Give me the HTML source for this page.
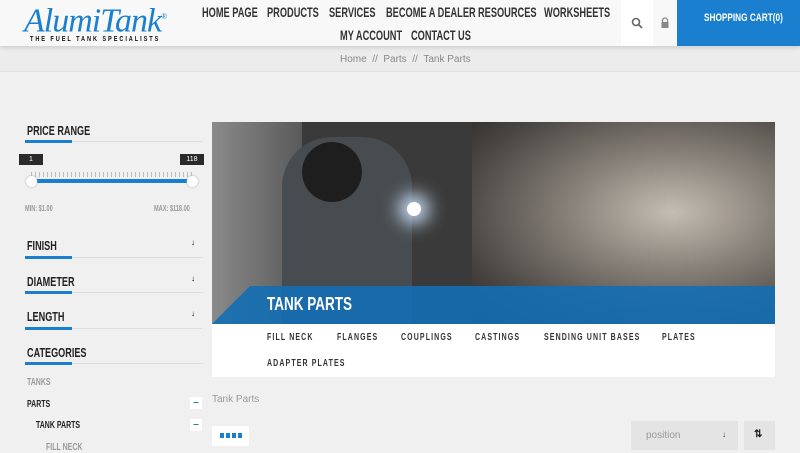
<!DOCTYPE html>
<html><head><style>
*{margin:0;padding:0;box-sizing:border-box}
body{width:800px;height:450px;overflow:hidden;background:#f0f0f0;font-family:"Liberation Sans",sans-serif;position:relative}
.a{position:absolute}
.c{font-family:"Liberation Sans",sans-serif;font-weight:bold;color:#333;white-space:nowrap;transform:scaleX(.7);transform-origin:0 0}
.nav{font-size:14px;color:#333;transform:scaleX(.66)}
.h{font-size:13px;color:#222}
.ul{height:1px;background:#ddd;width:177px;left:25px}
.ul b{position:absolute;left:0;top:-1px;width:47px;height:3px;background:#1a7fcf}
.sub{font-size:10px;letter-spacing:1.6px;color:#333}
</style></head><body>
<div class="a" style="left:0;top:0;width:800px;height:46px;background:#f8f8f8;box-shadow:0 2px 4px rgba(0,0,0,.12);z-index:2"></div>
<div class="a" style="left:24px;top:0px;z-index:3;font-family:'Liberation Serif',serif;font-style:italic;font-size:34px;color:#1a7fcf;letter-spacing:-1px;line-height:34px">AlumiTank<sup style="font-size:8px;font-style:normal">®</sup></div>
<div class="a c" style="left:30px;top:36px;z-index:3;font-size:7px;letter-spacing:2.4px;color:#111;transform:scaleX(.8)">THE FUEL TANK SPECIALISTS</div>
<div class="a c nav" style="left:202px;top:4px;z-index:3">HOME PAGE</div>
<div class="a c nav" style="left:267px;top:4px;z-index:3">PRODUCTS</div>
<div class="a c nav" style="left:329px;top:4px;z-index:3">SERVICES</div>
<div class="a c nav" style="left:386px;top:4px;z-index:3">BECOME A DEALER</div>
<div class="a c nav" style="left:478px;top:4px;z-index:3">RESOURCES</div>
<div class="a c nav" style="left:544px;top:4px;z-index:3">WORKSHEETS</div>
<div class="a c nav" style="left:340px;top:27px;z-index:3">MY ACCOUNT</div>
<div class="a c nav" style="left:411px;top:27px;z-index:3">CONTACT US</div>
<div class="a" style="left:621px;top:0;width:32px;height:46px;background:#fff;z-index:3"></div>
<svg class="a" style="left:631px;top:17px;z-index:4" width="12" height="12"><circle cx="5" cy="5" r="3.5" stroke="#666" stroke-width="1.6" fill="none"/><path d="M7.5 7.5L11 11" stroke="#666" stroke-width="1.8"/></svg>
<svg class="a" style="left:660px;top:17px;z-index:4" width="10" height="12"><path d="M2.5 5V3.5a2.5 2.5 0 0 1 5 0V5" stroke="#888" stroke-width="1.3" fill="none"/><rect x="1.5" y="5" width="7" height="6" fill="#888"/></svg>
<div class="a" style="left:677px;top:0;width:123px;height:46px;background:#1a7fcf;z-index:3"></div>
<div class="a c" style="left:704px;top:12px;z-index:4;color:#fff;font-size:11px;transform:scaleX(.75)">SHOPPING CART(0)</div>
<div class="a" style="left:0;top:46px;width:800px;height:26px;background:#ececec;border-bottom:1px solid #e2e2e2"></div>
<div class="a" style="left:340px;top:54px;font-size:10px;color:#888">Home &nbsp;// &nbsp;Parts &nbsp;// &nbsp;Tank Parts</div>

<div class="a c h" style="left:27px;top:123px">PRICE RANGE</div>
<div class="a ul" style="top:141px"><b></b></div>
<div class="a" style="left:19px;top:154px;width:24px;height:11px;background:#2a2a2a;color:#fff;font-size:7px;text-align:center;line-height:11px">1</div>
<div class="a" style="left:180px;top:154px;width:24px;height:11px;background:#2a2a2a;color:#fff;font-size:7px;text-align:center;line-height:11px">118</div>
<div class="a" style="left:31px;top:172px;width:161px;height:5px;background:repeating-linear-gradient(90deg,#bbb 0 1px,transparent 1px 4px)"></div>
<div class="a" style="left:31px;top:179px;width:161px;height:4px;background:#1a7fcf"></div>
<div class="a" style="left:26px;top:176px;width:11px;height:11px;border-radius:50%;background:#fff;box-shadow:0 0 2px #aaa"></div>
<div class="a" style="left:187px;top:176px;width:11px;height:11px;border-radius:50%;background:#fff;box-shadow:0 0 2px #aaa"></div>
<div class="a c" style="left:25px;top:204px;font-size:8px;color:#999">MIN: $1.00</div>
<div class="a c" style="left:154px;top:204px;font-size:8px;color:#999">MAX: $118.00</div>
<div class="a c h" style="left:27px;top:238px">FINISH</div><div class="a" style="left:191px;top:238px;font-size:8px">↓</div>
<div class="a ul" style="top:257px"><b></b></div>
<div class="a c h" style="left:27px;top:274px">DIAMETER</div><div class="a" style="left:191px;top:274px;font-size:8px">↓</div>
<div class="a ul" style="top:292px"><b></b></div>
<div class="a c h" style="left:27px;top:309px">LENGTH</div><div class="a" style="left:191px;top:309px;font-size:8px">↓</div>
<div class="a ul" style="top:328px"><b></b></div>
<div class="a c h" style="left:27px;top:345px">CATEGORIES</div>
<div class="a ul" style="top:363px"><b></b></div>
<div class="a c" style="left:27px;top:377px;font-size:10px;color:#999">TANKS</div>
<div class="a c" style="left:27px;top:399px;font-size:10px;color:#222">PARTS</div>
<div class="a" style="left:190px;top:397px;width:12px;height:12px;background:#fff;color:#1a7fcf;font-size:10px;text-align:center;line-height:11px;font-weight:bold">–</div>
<div class="a c" style="left:36px;top:420px;font-size:10px;color:#222">TANK PARTS</div>
<div class="a" style="left:190px;top:419px;width:12px;height:12px;background:#fff;color:#1a7fcf;font-size:10px;text-align:center;line-height:11px;font-weight:bold">–</div>
<div class="a c" style="left:46px;top:442px;font-size:10px;color:#999">FILL NECK</div>

<div class="a" style="left:212px;top:122px;width:563px;height:202px;background:#3a3a3a;overflow:hidden">
<div class="a" style="left:0;top:0;width:90px;height:202px;background:linear-gradient(90deg,#8a8a8a,#5a5a5a)"></div>
<div class="a" style="left:260px;top:0;width:303px;height:202px;background:radial-gradient(ellipse at 200px 90px,#c4bdb3,#8a837b 35%,#4a4643 75%,#2a2826)"></div>
<div class="a" style="left:70px;top:15px;width:130px;height:187px;background:#474c50;border-radius:50px 50px 0 0"></div>
<div class="a" style="left:90px;top:20px;width:60px;height:60px;background:#1e1e1e;border-radius:50%"></div>
<div class="a" style="left:195px;top:80px;width:14px;height:14px;border-radius:50%;background:#fff;box-shadow:0 0 18px 8px #cfe4ff"></div>
</div>
<div class="a" style="left:212px;top:286px;width:563px;height:38px;background:rgba(20,110,180,.9);clip-path:polygon(38px 0,100% 0,100% 100%,0 100%)"></div>
<div class="a c" style="left:267px;top:294px;color:#fff;font-size:18px;transform:scaleX(.75)">TANK PARTS</div>
<div class="a" style="left:212px;top:324px;width:563px;height:53px;background:#fff"></div>
<div class="a c sub" style="left:267px;top:332px">FILL NECK</div>
<div class="a c sub" style="left:337px;top:332px">FLANGES</div>
<div class="a c sub" style="left:401px;top:332px">COUPLINGS</div>
<div class="a c sub" style="left:475px;top:332px">CASTINGS</div>
<div class="a c sub" style="left:544px;top:332px">SENDING UNIT BASES</div>
<div class="a c sub" style="left:662px;top:332px">PLATES</div>
<div class="a c sub" style="left:267px;top:358px">ADAPTER PLATES</div>
<div class="a" style="left:212px;top:394px;font-size:10px;color:#999">Tank Parts</div>
<div class="a" style="left:212px;top:426px;width:37px;height:20px;background:#fff"></div>
<div class="a" style="left:220px;top:433px;width:22px;height:5px;background:repeating-linear-gradient(90deg,#1a7fcf 0 4px,transparent 4px 6px)"></div>
<div class="a" style="left:631px;top:421px;width:107px;height:29px;background:#e4e4e4"></div>
<div class="a" style="left:646px;top:430px;font-size:10px;color:#999">position</div>
<div class="a" style="left:722px;top:430px;font-size:8px;color:#333">↓</div>
<div class="a" style="left:744px;top:421px;width:31px;height:29px;background:#e4e4e4"></div>
<div class="a" style="left:754px;top:429px;font-size:10px;color:#222;font-weight:bold">⇅</div>
</body></html>
